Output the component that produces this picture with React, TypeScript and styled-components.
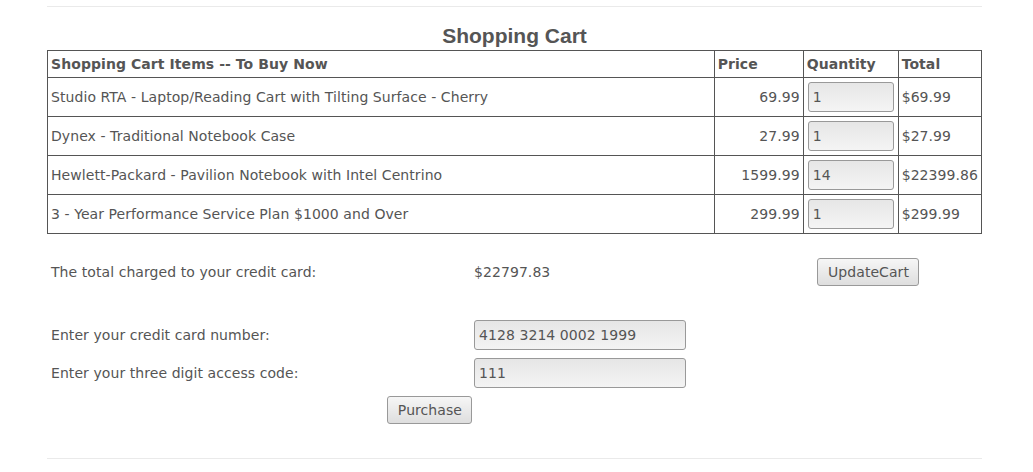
import React from "react";
import styled, { createGlobalStyle } from "styled-components";

const Global = createGlobalStyle`
  html, body { margin: 0; padding: 0; background: #fff; }
  body { font-family: "DejaVu Sans", sans-serif; font-size: 14px; color: #555; letter-spacing: 0.07px; }
`;

const Page = styled.div`
  width: 935px;
  padding: 6px 0 0 47px;
`;

const Rule = styled.hr`
  border: 0;
  border-top: 1px solid #eaeaea;
  margin: 0;
`;

const Title = styled.h2`
  margin: 15px 0 0;
  text-align: center;
  font-family: "Liberation Sans", Arial, sans-serif;
  font-size: 21px;
  line-height: 28px;
  font-weight: bold;
  letter-spacing: 0;
  color: #555;
`;

const Table = styled.table`
  width: 935px;
  border-collapse: collapse;
  border: 1px solid #555;
`;

const Th = styled.th<{ $w?: number }>`
  border: 1px solid #555;
  text-align: left;
  font-weight: bold;
  padding: 4px 3px;
  height: 18px;
  width: ${(p) => (p.$w ? `${p.$w}px` : "auto")};
`;

const Td = styled.td<{ $right?: boolean; $field?: boolean }>`
  border: 1px solid #555;
  padding: 4px ${(p) => (p.$field ? "3px 4px 4px" : "3px")};
  height: 30px;
  text-align: ${(p) => (p.$right ? "right" : "left")};
`;

const Field = styled.input<{ $w: number }>`
  box-sizing: border-box;
  width: ${(p) => p.$w}px;
  height: 30px;
  border: 1px solid #999;
  border-radius: 3px;
  background: linear-gradient(#e6e6e6, #f4f4f4);
  font-family: "DejaVu Sans", sans-serif;
  font-size: 14px;
  letter-spacing: 0.07px;
  color: #555;
  padding: 0 4px;
  outline: none;
`;

const Summary = styled.div`
  display: grid;
  grid-template-columns: 427px 343px 165px;
  align-items: center;
`;

const Label = styled.div`
  padding-left: 4px;
`;

const Value = styled.div``;

const Button = styled.button`
  font-family: "DejaVu Sans", sans-serif;
  font-size: 14px;
  letter-spacing: 0.07px;
  color: #555;
  border: 1px solid #999;
  border-radius: 3px;
  background: linear-gradient(#f6f6f6, #dedede);
  height: 28px;
  padding: 0 9px 0 10px;
`;

const ButtonCell = styled.div`
  margin-top: -1px;
`;

const TotalRow = styled(Summary)`
  margin-top: 23px;
  height: 30px;
`;

const FormRows = styled(Summary)`
  margin-top: 33px;
  row-gap: 8px;
  grid-template-rows: 30px 30px;
`;

const PurchaseWrap = styled.div`
  display: flex;
  justify-content: flex-end;
  padding-right: 2px;
  margin-top: 8px;
`;

const Bottom = styled.div`
  margin-top: 34px;
`;

const items = [
  { name: "Studio RTA - Laptop/Reading Cart with Tilting Surface - Cherry", price: "69.99", qty: "1", total: "$69.99" },
  { name: "Dynex - Traditional Notebook Case", price: "27.99", qty: "1", total: "$27.99" },
  { name: "Hewlett-Packard - Pavilion Notebook with Intel Centrino", price: "1599.99", qty: "14", total: "$22399.86" },
  { name: "3 - Year Performance Service Plan $1000 and Over", price: "299.99", qty: "1", total: "$299.99" },
];

export default function App() {
  return (
    <>
      <Global />
      <Page>
        <Rule />
        <Title>Shopping Cart</Title>
        <Table>
          <thead>
            <tr>
              <Th>Shopping Cart Items -- To Buy Now</Th>
              <Th $w={82}>Price</Th>
              <Th $w={88}>Quantity</Th>
              <Th $w={76}>Total</Th>
            </tr>
          </thead>
          <tbody>
            {items.map((it) => (
              <tr key={it.name}>
                <Td>{it.name}</Td>
                <Td $right>{it.price}</Td>
                <Td $field>
                  <Field $w={86} defaultValue={it.qty} />
                </Td>
                <Td>{it.total}</Td>
              </tr>
            ))}
          </tbody>
        </Table>
        <TotalRow>
          <Label>The total charged to your credit card:</Label>
          <Value>$22797.83</Value>
          <ButtonCell>
            <Button>UpdateCart</Button>
          </ButtonCell>
        </TotalRow>
        <FormRows>
          <Label>Enter your credit card number:</Label>
          <Field $w={212} defaultValue="4128 3214 0002 1999" />
          <div />
          <Label>Enter your three digit access code:</Label>
          <Field $w={212} defaultValue="111" />
          <div />
        </FormRows>
        <Summary>
          <PurchaseWrap>
            <Button>Purchase</Button>
          </PurchaseWrap>
        </Summary>
        <Bottom>
          <Rule />
        </Bottom>
      </Page>
    </>
  );
}
